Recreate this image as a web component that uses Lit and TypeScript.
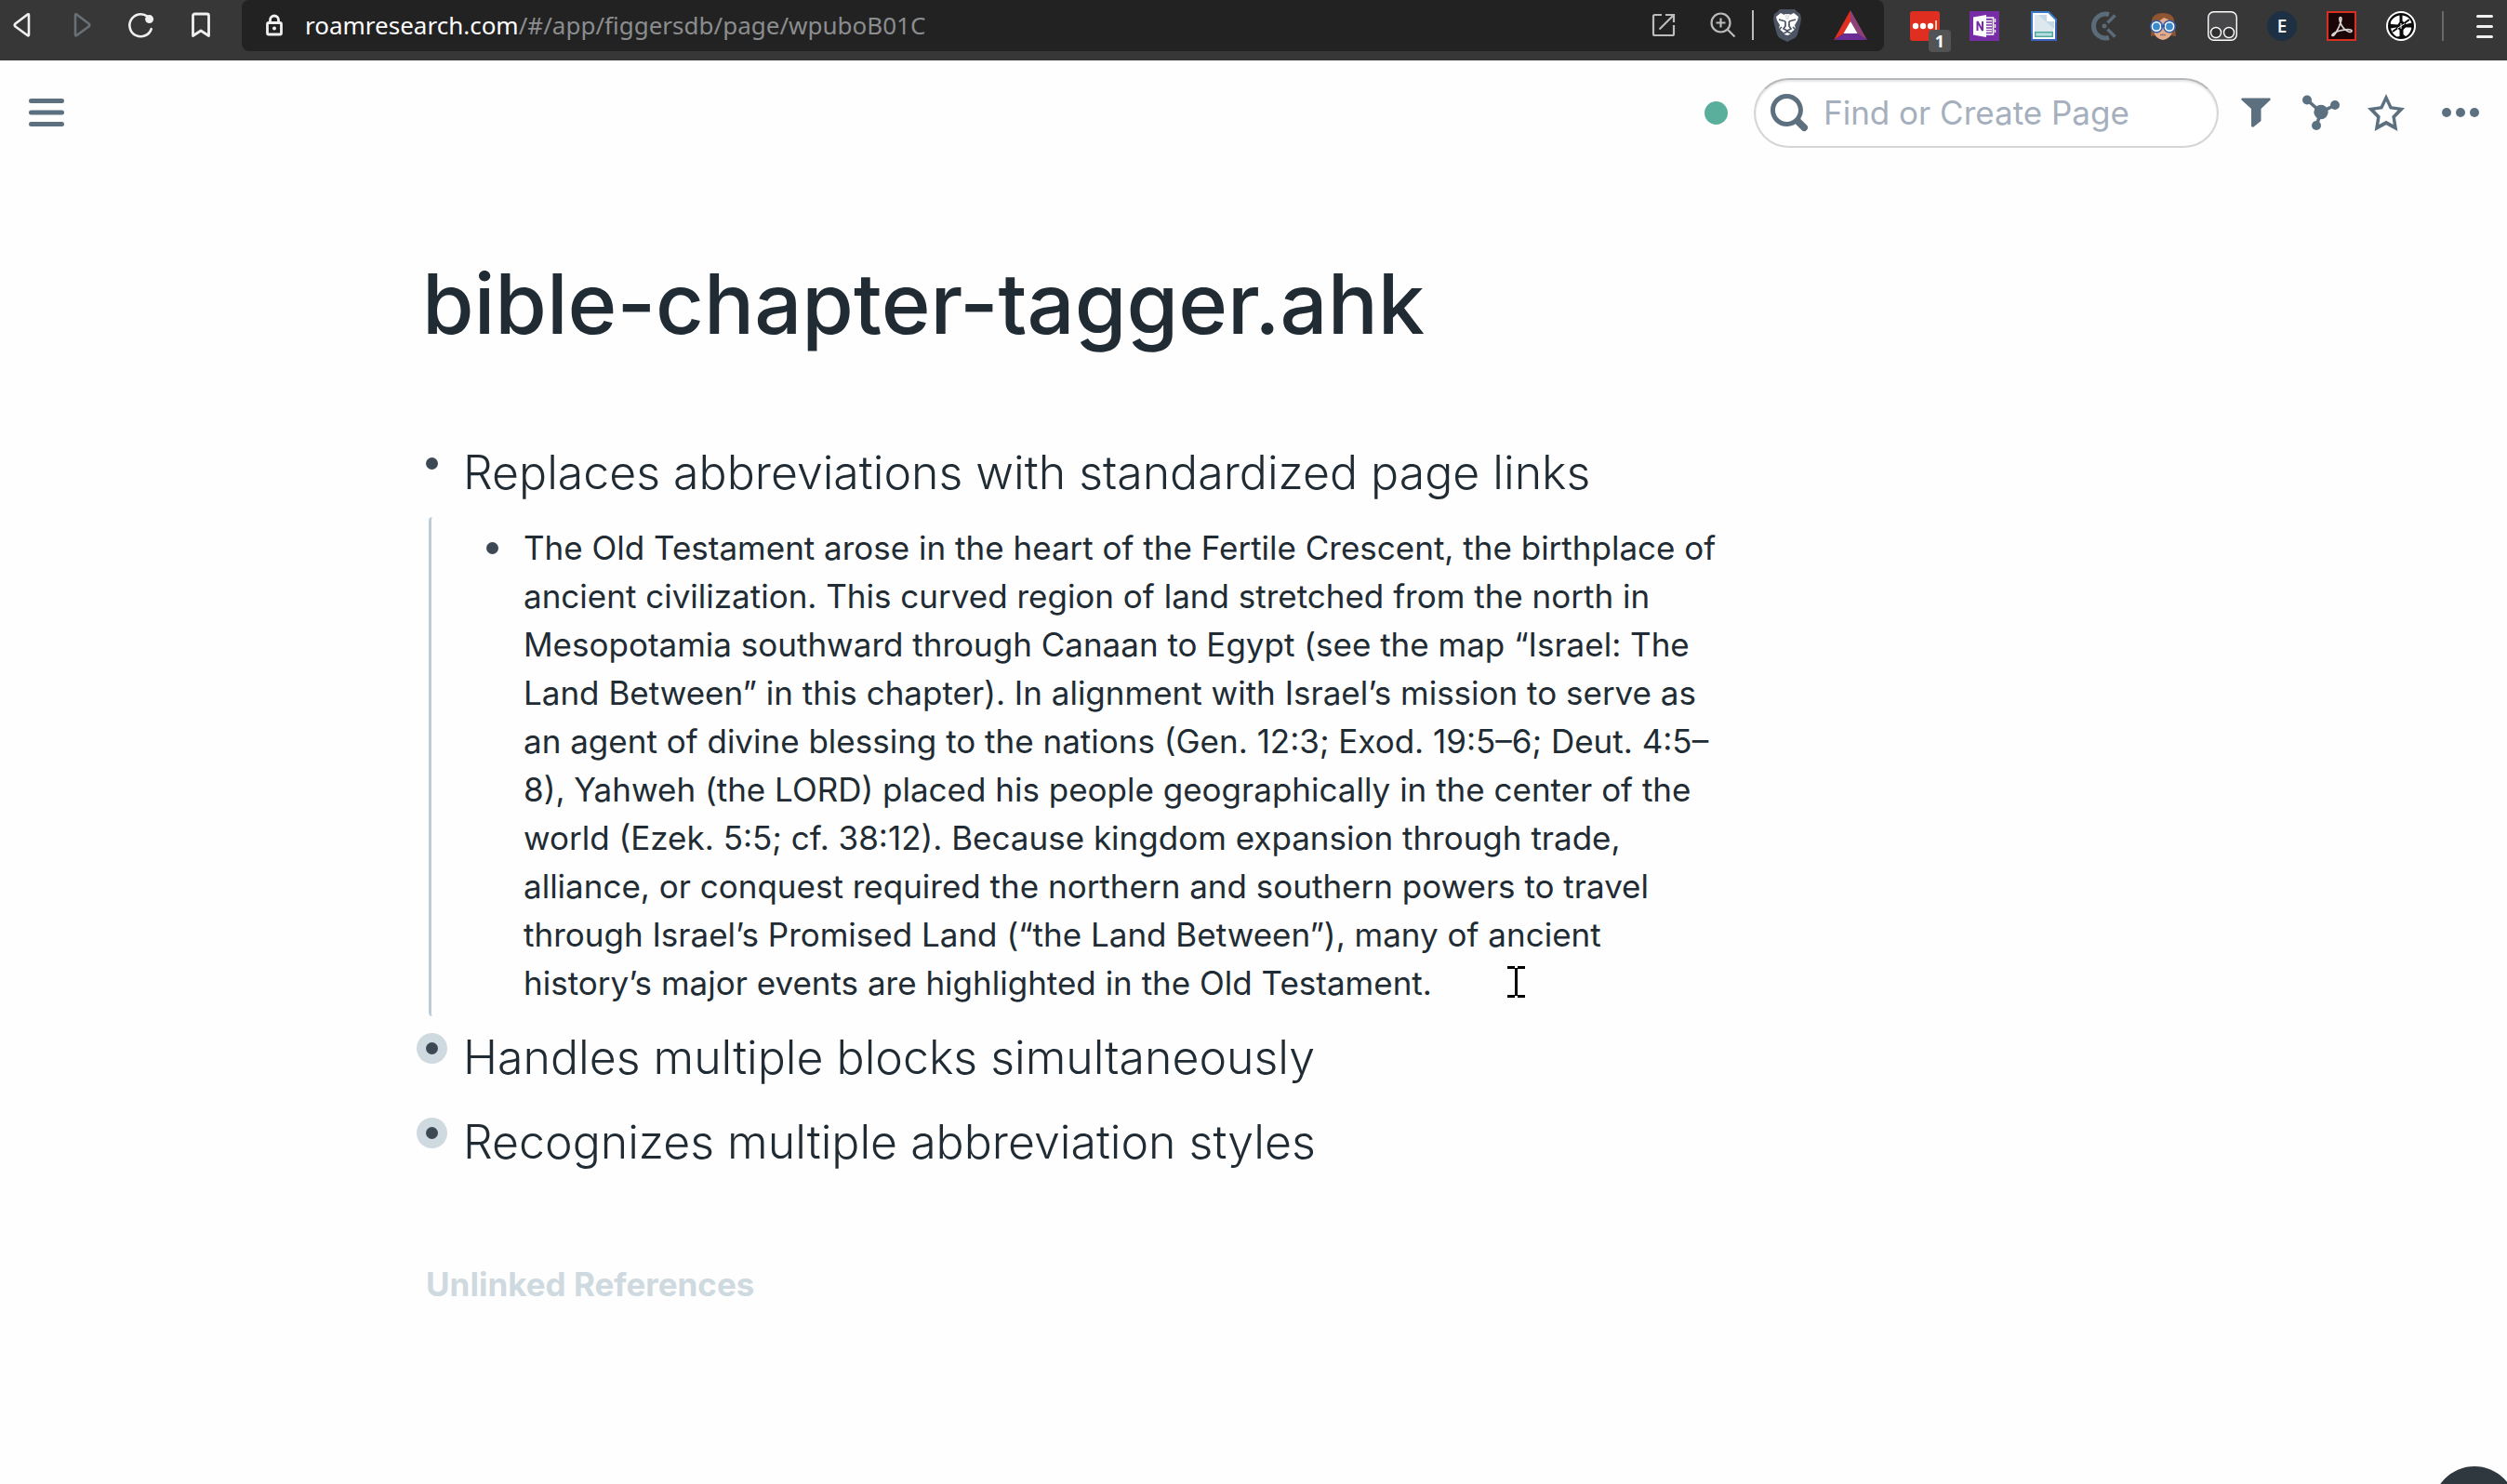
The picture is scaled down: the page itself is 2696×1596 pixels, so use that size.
import { LitElement, html, css, svg, nothing } from "lit";
import { customElement } from "lit/decorators.js";

const icon = (w: number, h: number, body: unknown) =>
  html`<svg class="icon" width=${w} height=${h} viewBox="0 0 ${w} ${h}" fill="none" aria-hidden="true">${body}</svg>`;

const glyphs = {
  back: icon(20, 28, svg`<path d="M16.500 2.500 Q17 2 17 3.500V24.500Q17 26 15.500 25L2.500 15.500Q1 14 2.500 12.500L15 3Q16 2 16.500 2.500Z" stroke="#f0f0f0" stroke-width="2.600" stroke-linejoin="round"/>`),
  forward: icon(20, 28, svg`<path d="M3.500 2.500 Q3 2 3 3.500V24.500Q3 26 4.500 25L17.500 15.500Q19 14 17.500 12.500L5 3Q4 2 3.500 2.500Z" stroke="#687077" stroke-width="2.600" stroke-linejoin="round"/>`),
  reload: icon(28, 28, svg`<path d="M20.500 4.600A12 12 0 1 0 24.700 18.200" stroke="#f0f0f0" stroke-width="2.600" stroke-linecap="round"/><circle cx="22.600" cy="7.600" r="4.500" fill="#f0f0f0"/>`),
  bookmark: icon(20, 28, svg`<path d="M1.500 4a2 2 0 0 1 2-2h13a2 2 0 0 1 2 2v21.500l-8.500-5.500-8.500 5.500Z" stroke="#f0f0f0" stroke-width="2.800" stroke-linejoin="round"/>`),
  lock: icon(18, 24, svg`<path d="M4.500 9V6.500a4.500 4.500 0 0 1 9 0V9" stroke="#f0f0f0" stroke-width="2.800"/><rect x="1.500" y="9.500" width="15" height="12.500" rx="1.500" stroke="#f0f0f0" stroke-width="2.800"/><circle cx="9" cy="15.500" r="2" fill="#f0f0f0"/>`),
  open: icon(26, 26, svg`<path d="M11 2H3.500A1.500 1.500 0 0 0 2 3.500v19A1.500 1.500 0 0 0 3.500 24h19a1.500 1.500 0 0 0 1.500-1.500V13M15 2h9v8M24 2L8.500 17.500" stroke="#b9bbbd" stroke-width="2.200"/>`),
  zoom: icon(28, 28, svg`<circle cx="11.500" cy="11.500" r="10" stroke="#b9bbbd" stroke-width="2.200"/><path d="M18.800 18.800L26.500 26.500M6.500 11.500h10M11.500 6.500v10" stroke="#b9bbbd" stroke-width="2.200"/>`),
  lion: icon(32, 36, svg`<path d="M8 1h16l3 3 3 2 1 5-1 6-3 11q-1 3-4 4.500L16 36l-7-3.500Q6 31 5 28L2 17 1 11l1-5 3-2Z" fill="#4d5564"/><path d="M9 5l-5 4 1 4 3 5-1 4 4 3 2 3 3 1 3-1 2-3 4-3-1-4 3-5 1-4-5-4-4 2h-6Z" fill="#fff"/><path d="M7 12l7 2M25 12l-7 2M14 14v5l-2 3 4 2 4-2-2-3v-5M10 20l-3 3M22 20l3 3M12 27l4-2 4 2" stroke="#4d5564" stroke-width="1.700"/><path d="M13 6h6l-1.500 6h-3Z" fill="#e7e8ea"/>`),
  triangle: icon(36, 32, svg`<path d="M18 0L0 32 11 25 18 12Z" fill="#e02f20"/><path d="M18 0l18 32-11-7-7-13Z" fill="#8c4179"/><path d="M0 32h36l-11-7H11Z" fill="#6c2c96"/><path d="M18 12l7.500 13h-15Z" fill="#fff"/>`),
  dots: icon(32, 32, svg`<rect width="32" height="32" rx="3" fill="#e02f20"/><circle cx="6" cy="16" r="3.200" fill="#fff"/><circle cx="14" cy="16" r="3.200" fill="#fff"/><circle cx="22" cy="16" r="3.200" fill="#fff"/><path d="M28 10v10" stroke="#ffc9a8" stroke-width="2"/>`),
  notebook: icon(32, 32, svg`<rect width="32" height="32" fill="#762da6"/><path d="M18 7h7.500v18H18" stroke="#fff" stroke-width="1.600"/><path d="M18 10.500h6M18 13.500h6M18 16.500h6M18 19.500h6M18 22h6" stroke="#fff" stroke-width="1.400"/><path d="M27.500 8v4M27.500 14v4M27.500 20v3" stroke="#fff" stroke-width="1.400"/><path d="M4 6.500L18 4v24L4 25.500Z" fill="#fff"/><path d="M8.500 21V11l5.500 10V11" stroke="#762da6" stroke-width="2"/>`),
  page: icon(28, 32, svg`<path d="M1 1h18l8 8v22H1Z" fill="#dce7ee" stroke="#3a7cc8" stroke-width="2"/><path d="M1 24v7h26V12" stroke="#3a62bd" stroke-width="2"/><path d="M3 3h15v7h7v19H3Z" stroke="#fff" stroke-width="1.800"/><path d="M8 4l17 15v-8h-8V4Z" fill="#c4d8e6"/><path d="M18 2l8 8h-8Z" fill="#fff"/><rect x="4.700" y="22.700" width="18.600" height="4.600" fill="#b8dce3" stroke="#50a89a" stroke-width="1.500"/>`),
  clock: icon(30, 32, svg`<path d="M21 3.500A13 13 0 1 0 21 28.500" stroke="#5b6b78" stroke-width="5"/><circle cx="16" cy="16" r="2.500" fill="#5b6b78"/><path d="M19.500 12.500L27.500 4.500M19.500 19.500L27.500 27.500" stroke="#5b6b78" stroke-width="3.400"/>`),
  face: icon(30, 32, svg`<path d="M2 27L3 9Q5 2 15 2t12 7l2 18-6-1H7Z" fill="#8f5531"/><path d="M5 14Q9 12 16 7q7 2 9 7v8q-2 8-10 9Q7 30 5 22Z" fill="#e3ab8b"/><circle cx="8" cy="16.500" r="4.800" fill="#3d8bcb" stroke="#fff" stroke-width="1.800"/><circle cx="22" cy="16.500" r="4.800" fill="#3d8bcb" stroke="#fff" stroke-width="1.800"/><circle cx="8" cy="16.500" r="6.300" stroke="#2c5cab" stroke-width="1.500"/><circle cx="22" cy="16.500" r="6.300" stroke="#2c5cab" stroke-width="1.500"/><path d="M13 16h4" stroke="#2c5cab" stroke-width="2"/><path d="M12 25.500h6" stroke="#8b7a70" stroke-width="1.500"/>`),
  box: icon(32, 32, svg`<rect x=".7" y=".7" width="30.600" height="30.600" rx="6" fill="#48484a" stroke="#fff" stroke-width="1.400"/><circle cx="9" cy="23" r="5.500" fill="#303030" stroke="#fff" stroke-width="1.400"/><circle cx="23" cy="23" r="5.500" fill="#303030" stroke="#fff" stroke-width="1.400"/>`),
  acrobat: icon(32, 32, svg`<rect x="1" y="1" width="30" height="30" fill="#1b0507" stroke="#d83020" stroke-width="2"/><path d="M15 6.500q-2 0-.5 5 2.500 8 10 11 3 0 2.500-1.700-1-1.500-6-1-8 .7-12 3.200-3.500 2-3 3.300 1.500 1 4.500-4 3-5 5-11.300 1-4.500-.5-4.500Z" stroke="#d9d4d4" stroke-width="1.700"/>`),
  ball: icon(32, 32, svg`<circle cx="16" cy="16" r="15" fill="#0b0b0b" stroke="#fff" stroke-width="2"/><path d="M14.500 4.500v7l-2 3-7-.5q-1.500-1 0-3.500 3-5 9-6ZM17.500 4.500v6l4 3.500 6-1.500q-2-7-10-8ZM5 18.500l6-1 3.500 3v6.500l-3 .500q-5-3-6.500-9ZM18.500 20l2.500-2.500h6q.5 1 0 2-2 6-6 7.500l-2.500-2Z" fill="#fff"/><path d="M7 22L25 9" stroke="#0b0b0b" stroke-width="2"/><path d="M12 18.500l8-5M16 13v6" stroke="#fff" stroke-width="1"/>`),
  menu: icon(18, 26, svg`<path d="M1.500 2.500h15M1.500 13.500h15M1.500 24.500h15" stroke="#f0f0f0" stroke-width="3" stroke-linecap="round"/>`),
  sidebar: icon(40, 32, svg`<path d="M3.500 3.500h33M3.500 16h33M3.500 28.500h33" stroke="#5c7080" stroke-width="5" stroke-linecap="round"/>`),
  search: html`<svg class="icon" width="40" height="40" viewBox="0 0 16 16" aria-hidden="true"><path fill="#5c7080" d="M15.550 13.430l-2.670-2.680a6.940 6.940 0 001.110-3.760c0-3.870-3.130-7-7-7s-7 3.130-7 7 3.130 7 7 7c1.390 0 2.680-.42 3.760-1.110l2.680 2.670a1.498 1.498 0 102.120-2.120zm-8.560-1.440c-2.760 0-5-2.240-5-5s2.240-5 5-5 5 2.240 5 5-2.240 5-5 5z"/></svg>`,
  filter: icon(32, 32, svg`<path d="M1.200.5h29.600Q32.500 1 31.500 2.500L21.500 12V25L13.500 31.500Q11.500 32 11 30.500V12L.5 2.500Q-.5 1 1.200.5Z" fill="#5c7080"/>`),
  graph: icon(40, 40, svg`<path d="M5 6.500L20 19.500 35 12M20 19.500L15 34" stroke="#5c7080" stroke-width="3.600"/><circle cx="20" cy="19.500" r="7.700" fill="#5c7080"/><circle cx="5" cy="6.500" r="5" fill="#5c7080"/><circle cx="35" cy="12" r="5" fill="#5c7080"/><circle cx="15" cy="34" r="5" fill="#5c7080"/>`),
  star: html`<svg class="icon" width="40" height="40" viewBox="0 0 16 16" aria-hidden="true"><path fill="#5c7080" d="M16 6.110l-5.530-.84L8 0 5.530 5.270 0 6.110l4 4.100L3.060 16 8 13.270 12.940 16 12 10.210l4-4.100zM4.910 13.200l.59-3.620L3 7.020l3.450-.53L8 3.200l1.550 3.290 3.450.53-2.500 2.560.59 3.620L8 11.490 4.910 13.200z"/></svg>`,
  more: icon(40, 40, svg`<circle cx="5" cy="20" r="5" fill="#5c7080"/><circle cx="20" cy="20" r="5" fill="#5c7080"/><circle cx="35" cy="20" r="5" fill="#5c7080"/>`),
};

const base = css`
  :host { display: block; }
  * { box-sizing: border-box; }
  button {
    display: grid; place-items: center; padding: 0; border: 0;
    background: none; font: inherit; color: inherit; cursor: pointer;
  }
  .icon { display: block; flex: none; overflow: visible; }
`;

@customElement("browser-bar")
class BrowserBar extends LitElement {
  static styles = [base, css`
    .bar { display: flex; height: 65px; padding-bottom: 10px; background: #373737; }
    .nav { flex: none; display: flex; align-items: center; gap: 16px; width: 260px; padding-bottom: 2px; }
    .nav button { flex: none; width: 48px; height: 48px; }
    .address {
      flex: 1; display: flex; align-items: center; min-width: 0; padding: 0 18px 2px 26px;
      border-radius: 8px; background: #222;
      font-family: "Noto Sans", "Open Sans", sans-serif; font-size: 26px; line-height: 36px;
    }
    .url { flex: 1; margin-left: 24px; color: #8b8d8f; text-decoration: none; white-space: nowrap; overflow: hidden; }
    .host { color: #fff; }
    .actions { display: flex; align-items: center; }
    .open { margin-right: 37px; }
    .zoom { margin-right: 17px; }
    .rule { width: 2px; height: 32px; background: #b9bbbd; }
    .lion { margin: 0 34px 0 20px; }
    .extensions { display: flex; flex: none; align-items: center; gap: 32px; margin-left: 28px; }
    .extensions button { position: relative; width: 32px; height: 32px; }
    .badge {
      position: absolute; left: 20px; top: 20px; width: 24px; height: 24px; border-radius: 4px;
      background: #525355; color: #fff; font: 700 18px/24px "Open Sans", sans-serif; text-align: center;
    }
    .account { border-radius: 50%; background: #1e3044; color: #fff; font: 600 19px/32px "Open Sans", sans-serif; }
    .divider { flex: none; width: 2px; height: 32px; margin: 12px 0 0 28px; background: #66696c; }
    .menu { flex: none; width: 32px; margin: 0 8px 0 28px; }
  `];

  render() {
    const extensions: [string, unknown][] = [
      ["Passwords", html`${glyphs.dots}<span class="badge">1</span>`],
      ["Notebook", glyphs.notebook],
      ["Page capture", glyphs.page],
      ["Time tracker", glyphs.clock],
      ["Reader", glyphs.face],
      ["Scripts", glyphs.box],
      ["Account", "E"],
      ["PDF", glyphs.acrobat],
      ["Media", glyphs.ball],
    ];
    return html`
      <nav class="bar" aria-label="Browser">
        <div class="nav">
          <button aria-label="Back">${glyphs.back}</button>
          <button aria-label="Forward">${glyphs.forward}</button>
          <button aria-label="Reload">${glyphs.reload}</button>
          <button aria-label="Bookmark">${glyphs.bookmark}</button>
        </div>
        <div class="address">
          ${glyphs.lock}
          <a class="url" href="#/app/figgersdb/page/wpuboB01C"><span class="host">roamresearch.com</span>/#/app/figgersdb/page/wpuboB01C</a>
          <div class="actions">
            <button class="open" aria-label="Open in new window">${glyphs.open}</button>
            <button class="zoom" aria-label="Zoom">${glyphs.zoom}</button>
            <span class="rule"></span>
            <button class="lion" aria-label="Shields">${glyphs.lion}</button>
            <button aria-label="Rewards">${glyphs.triangle}</button>
          </div>
        </div>
        <div class="extensions">
          ${extensions.map(([label, mark]) => html`
            <button class=${mark === "E" ? "account" : "extension"} aria-label=${label}>${mark}</button>`)}
        </div>
        <span class="divider"></span>
        <button class="menu" aria-label="Menu">${glyphs.menu}</button>
      </nav>`;
  }
}

@customElement("page-toolbar")
class PageToolbar extends LitElement {
  static styles = [base, css`
    .toolbar { display: flex; align-items: center; padding: 19px 30px; }
    .sidebar, .tools { padding-bottom: 2px; }
    .status { width: 25px; height: 25px; margin: 0 28px 0 auto; border-radius: 50%; background: #5aaf9c; }
    .search {
      display: flex; align-items: center; gap: 17px; width: 500px; height: 75px; padding: 0 16px 2px;
      border: 2px solid #d3d5d6; border-top-color: #b5b8ba; border-radius: 38px;
      background: #fff; box-shadow: inset 0 2px 2px #10161a1a;
    }
    .field {
      flex: 1; min-width: 0; padding: 0; border: 0; outline: 0; background: none;
      font: 400 35px/44px Inter, sans-serif; font-optical-sizing: none; color: #202b33;
    }
    .field::placeholder { color: #a5afbd; opacity: 1; }
    .tools { display: flex; align-items: center; gap: 30px; margin-left: 20px; }
    .tools button { width: 40px; height: 40px; }
    .tools .more { margin-left: 10px; }
  `];

  render() {
    return html`
      <header class="toolbar">
        <button class="sidebar" aria-label="Open sidebar">${glyphs.sidebar}</button>
        <span class="status"></span>
        <label class="search">
          ${glyphs.search}
          <input class="field" type="text" placeholder="Find or Create Page" aria-label="Find or Create Page" />
        </label>
        <div class="tools">
          <button aria-label="Filter">${glyphs.filter}</button>
          <button aria-label="Graph">${glyphs.graph}</button>
          <button aria-label="Star page">${glyphs.star}</button>
          <button class="more" aria-label="More">${glyphs.more}</button>
        </div>
      </header>`;
  }
}

interface Block { text: string; collapsed?: boolean; children?: Block[]; }

const title = "bible-chapter-tagger.ahk";
const blocks: Block[] = [
  {
    text: "Replaces abbreviations with standardized page links",
    children: [{
      text: "The Old Testament arose in the heart of the Fertile Crescent, the birthplace of ancient civilization. This curved region of land stretched from the north in Mesopotamia southward through Canaan to Egypt (see the map “Israel: The Land Between” in this chapter). In alignment with Israel’s mission to serve as an agent of divine blessing to the nations (Gen. 12:3; Exod. 19:5–6; Deut. 4:5–8), Yahweh (the LORD) placed his people geographically in the center of the world (Ezek. 5:5; cf. 38:12). Because kingdom expansion through trade, alliance, or conquest required the northern and southern powers to travel through Israel’s Promised Land (“the Land Between”), many of ancient history’s major events are highlighted in the Old Testament.",
    }],
  },
  { text: "Handles multiple blocks simultaneously", collapsed: true },
  { text: "Recognizes multiple abbreviation styles", collapsed: true },
];

@customElement("app-root")
class AppRoot extends LitElement {
  static styles = [base, css`
    :host {
      position: relative; min-height: 100vh; overflow: hidden; background: #fefefe; color: #202b33;
      font-family: Inter, sans-serif; font-optical-sizing: none;
    }
    .article { max-width: 1860px; padding: 97px 0 80px 448px; }
    .title { margin: 0 0 97px 6px; font-size: 90px; line-height: 104px; font-weight: 500; }
    .blocks, .children { margin: 0; padding: 0; list-style: none; }
    .row { display: flex; align-items: flex-start; }
    .heading { margin: 0; font-size: 50px; line-height: 64px; font-weight: 300; }
    .bullet { flex: none; width: 33px; height: 33px; margin-top: 6px; border-radius: 50%; }
    .bullet::before { content: ""; width: 13px; height: 13px; border-radius: 50%; background: #3c4954; }
    .collapsed { background: #ced9e0; }
    .blocks > .block + .block { margin-top: 27px; }
    .blocks > .block.open + .block { margin-top: 12px; }
    .blocks > .block > .row { gap: 17px; }
    .children {
      margin: 16px 0 0 13px; padding: 7px 0 10px 49px;
      border-left: 3px solid #bfccd6; border-radius: 4px;
    }
    .children .row { gap: 17px; }
    .children .bullet { margin-top: 10px; }
    .body { margin: 0; font-size: 35px; line-height: 52px; font-weight: 400; }
    .unlinked { margin: 99px 0 0 10px; font-size: 35px; line-height: 44px; font-weight: 700; color: #ced9e0; }
    .cursor { position: absolute; left: 1621px; top: 1039px; }
    .help {
      position: fixed; right: -10px; bottom: -71px; width: 90px; height: 90px;
      border-radius: 50%; background: #30383f;
    }
  `];

  private block(b: Block, depth: number): unknown {
    return html`
      <li class="block ${b.children ? "open" : ""}">
        <div class="row">
          <button class="bullet ${b.collapsed ? "collapsed" : ""}" aria-label="Toggle block"></button>
          ${depth === 0 ? html`<h2 class="heading">${b.text}</h2>` : html`<p class="body">${b.text}</p>`}
        </div>
        ${b.children ? html`<ul class="children">${b.children.map((c) => this.block(c, depth + 1))}</ul>` : nothing}
      </li>`;
  }

  render() {
    return html`
      <browser-bar></browser-bar>
      <page-toolbar></page-toolbar>
      <main class="article">
        <h1 class="title">${title}</h1>
        <ul class="blocks">${blocks.map((b) => this.block(b, 0))}</ul>
        <h3 class="unlinked">Unlinked References</h3>
      </main>
      <svg class="cursor" width="19" height="34" viewBox="0 0 19 34" fill="none" aria-hidden="true">
        <path d="M0 1.500h8M11 1.500h8M0 32.500h8M11 32.500h8M9.500 2v30" stroke="#000" stroke-width="3"/>
      </svg>
      <button class="help" aria-label="Help"></button>`;
  }
}
